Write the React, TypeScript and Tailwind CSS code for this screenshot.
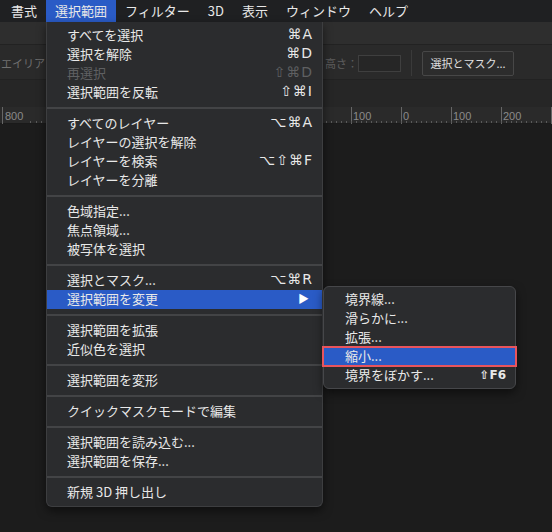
import React from "react";

type Item =
  | { sep: true }
  | { label: string; shortcut?: string; disabled?: boolean; active?: boolean; sub?: boolean };

const menuItems: Item[] = [
  { label: "すべてを選択", shortcut: "⌘A" },
  { label: "選択を解除", shortcut: "⌘D" },
  { label: "再選択", shortcut: "⇧⌘D", disabled: true },
  { label: "選択範囲を反転", shortcut: "⇧⌘I" },
  { sep: true },
  { label: "すべてのレイヤー", shortcut: "⌥⌘A" },
  { label: "レイヤーの選択を解除" },
  { label: "レイヤーを検索", shortcut: "⌥⇧⌘F" },
  { label: "レイヤーを分離" },
  { sep: true },
  { label: "色域指定..." },
  { label: "焦点領域..." },
  { label: "被写体を選択" },
  { sep: true },
  { label: "選択とマスク...", shortcut: "⌥⌘R" },
  { label: "選択範囲を変更", active: true, sub: true },
  { sep: true },
  { label: "選択範囲を拡張" },
  { label: "近似色を選択" },
  { sep: true },
  { label: "選択範囲を変形" },
  { sep: true },
  { label: "クイックマスクモードで編集" },
  { sep: true },
  { label: "選択範囲を読み込む..." },
  { label: "選択範囲を保存..." },
  { sep: true },
  { label: "新規 3D 押し出し" },
];

const subItems = [
  { label: "境界線..." },
  { label: "滑らかに..." },
  { label: "拡張..." },
  { label: "縮小...", active: true },
  { label: "境界をぼかす...", shortcut: "⇧F6" },
];

const topMenu = ["書式", "選択範囲", "フィルター", "3D", "表示", "ウィンドウ", "ヘルプ"];

function Shortcut({ text, dim }: { text: string; dim?: boolean }) {
  return (
    <span
      className={`ml-auto font-['DejaVu_Sans',sans-serif] text-[14px] tracking-[1px] ${
        dim ? "text-[#5f6062]" : "text-[#e8e8e8]"
      }`}
    >
      {text}
    </span>
  );
}

function Ruler() {
  const majors = [2, 351, 401, 451, 501, 551];
  const labels = [
    { x: 5, t: "800" },
    { x: 353, t: "100" },
    { x: 403, t: "0" },
    { x: 453, t: "100" },
    { x: 503, t: "200" },
  ];
  return (
    <div className="relative h-[17px] bg-[#2a2a2a] border-b border-[#1a1a1a]">
      <svg width="552" height="17" className="absolute inset-0">
        {majors.map((x) => (
          <line key={x} x1={x + 0.5} y1={0} x2={x + 0.5} y2={17} stroke="#666" strokeWidth={1} />
        ))}
        {Array.from({ length: 60 }).map((_, i) => {
          const x = 1 + i * 5 + 250;
          return <rect key={i} x={x} y={14} width={1} height={2} fill="#5a5a5a" />;
        })}
        <rect x={30} y={14} width={1} height={2} fill="#5a5a5a" />
        <rect x={36} y={14} width={1} height={2} fill="#5a5a5a" />
        <rect x={41} y={14} width={1} height={2} fill="#5a5a5a" />
      </svg>
      {labels.map((l) => (
        <span
          key={l.x}
          className="absolute top-[2px] text-[11px] leading-[14px] text-[#8a8a8a] font-['Liberation_Sans',sans-serif]"
          style={{ left: l.x }}
        >
          {l.t}
        </span>
      ))}
    </div>
  );
}

export default function App() {
  return (
    <div className="relative w-[552px] h-[532px] overflow-hidden bg-[#1c1c1c] font-['Noto_Sans_CJK_JP','Noto_Sans',sans-serif] text-[13px] text-[#e8e8e8]">
      {/* Menu bar */}
      <div className="flex h-[22px] items-center bg-[#1f2022] pl-[2px]">
        {topMenu.map((m) => (
          <span
            key={m}
            className={`h-[22px] px-[9px] pb-[1px] leading-[21px] ${m === "選択範囲" ? "bg-[#2a5bc6]" : ""}`}
          >
            {m}
          </span>
        ))}
      </div>

      {/* Top strip */}
      <div className="h-[23px] bg-[#2e2e2e] border-b border-[#222]" />

      {/* Options bar */}
      <div className="flex h-[35px] items-center bg-[#2a2a2a] border-b border-[#222] pr-[38px] pt-[2px]">
        <span className="pl-[1px] text-[11px] text-[#707070]">エイリアス</span>
        <div className="ml-auto flex items-center">
          <span className="text-[11px] text-[#5e5e5e]">高さ：</span>
          <div className="h-[17px] w-[43px] border border-[#3f3f3f] bg-[#262626]" />
          <div className="mx-[10px] h-[26px] w-px bg-[#3a3a3a]" />
          <div className="flex h-[25px] w-[92px] items-center justify-center rounded-[2px] border border-[#474747] bg-[#2c2c2c] text-[11px] text-[#e0e0e0]">
            選択とマスク...
          </div>
        </div>
      </div>

      <div className="h-[27px] bg-[#262626]" />
      <Ruler />

      {/* Dropdown */}
      <div className="absolute left-[46px] top-[22px] w-[277px] rounded-b-[6px] border border-t-0 border-[#3d3e40] bg-[#2b2c2e] py-[4px] shadow-[0_4px_10px_rgba(0,0,0,0.5)]">
        {menuItems.map((it, i) =>
          "sep" in it ? (
            <div key={i} className="flex h-[12px] items-center">
              <div className="h-[2px] w-full bg-[#434446]" />
            </div>
          ) : (
            <div
              key={i}
              className={`flex h-[19px] items-center pl-[20px] pr-[9px] pb-[2px] ${
                it.active ? "bg-[#2a5bc6]" : ""
              } ${it.disabled ? "text-[#5f6062]" : ""}`}
            >
              <span>{it.label}</span>
              {it.shortcut && <Shortcut text={it.shortcut} dim={it.disabled} />}
              {it.sub && <span className="ml-auto mr-[4px] text-[11px] text-white">▶</span>}
            </div>
          )
        )}
      </div>

      {/* Submenu */}
      <div className="absolute left-[323px] top-[286px] w-[193px] rounded-[6px] border border-[#46474a] bg-[#2b2c2e] py-[3px] shadow-[0_4px_10px_rgba(0,0,0,0.5)]">
        {subItems.map((it) => (
          <div
            key={it.label}
            className={`flex h-[19px] items-center pl-[21px] pr-[9px] pb-[2px] ${
              it.active ? "bg-[#2a5bc6] outline-2 outline-[#e9545d] outline-offset-[-1px] -mx-px pl-[22px]" : ""
            }`}
          >
            <span>{it.label}</span>
            {it.shortcut && (
              <span className="ml-auto font-['DejaVu_Sans',sans-serif] text-[12px] font-bold">{it.shortcut}</span>
            )}
          </div>
        ))}
      </div>
    </div>
  );
}
